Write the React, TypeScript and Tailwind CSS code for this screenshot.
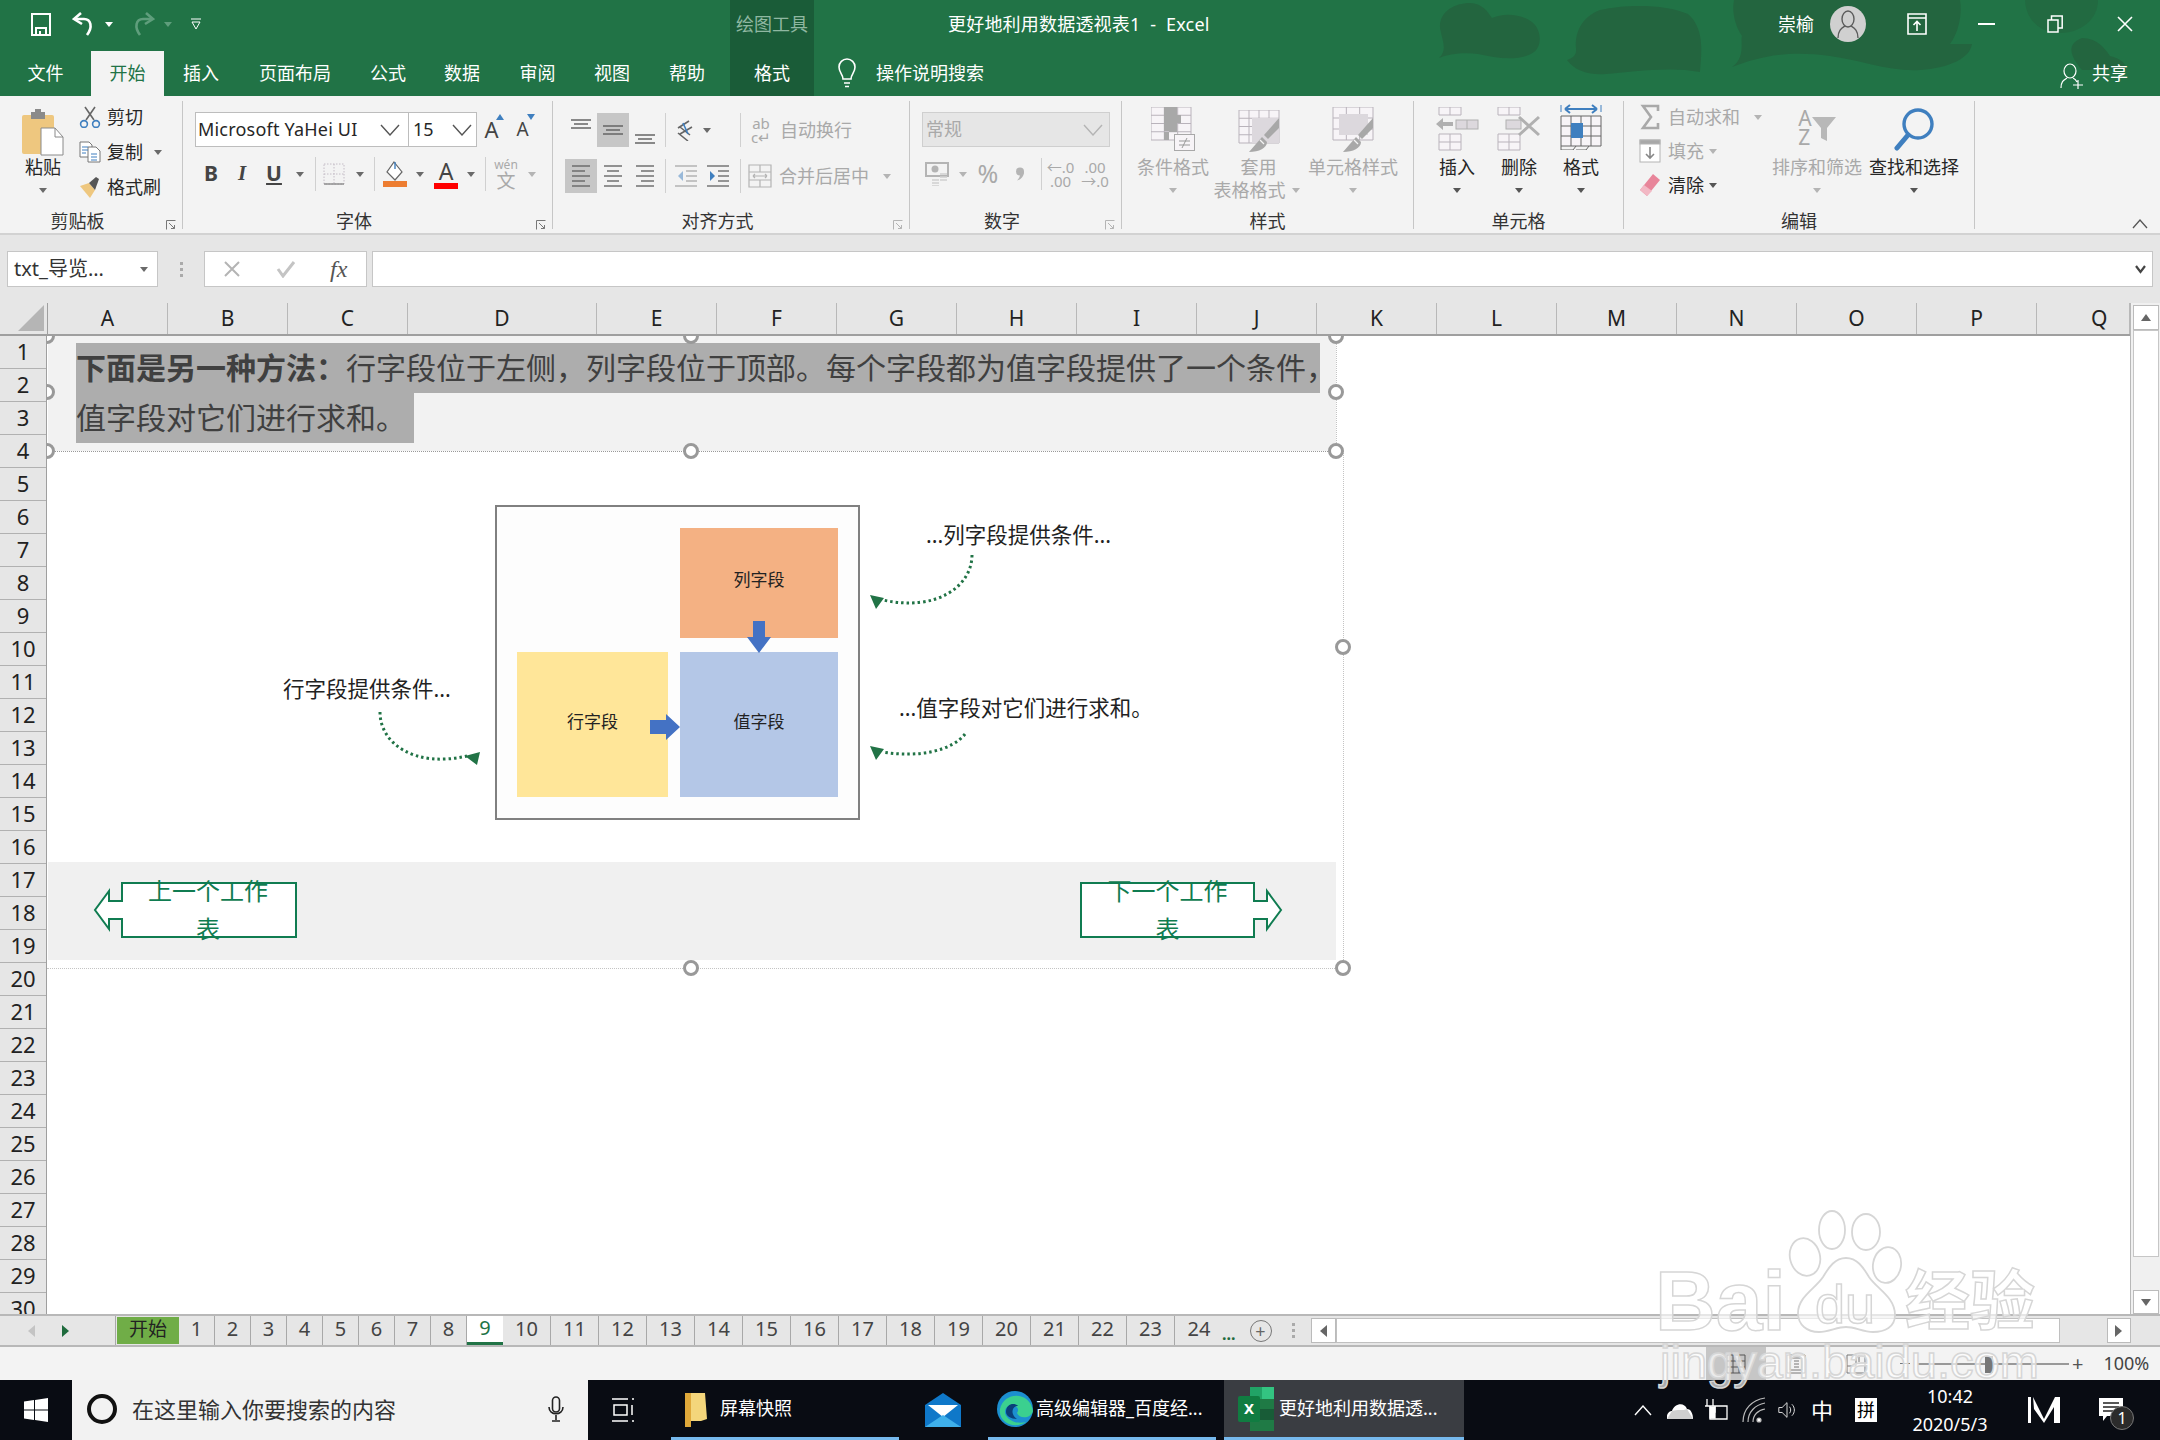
import React from 'react';

const COLS: [string, number][] = [
  ['A', 120], ['B', 120], ['C', 120], ['D', 189], ['E', 120], ['F', 120], ['G', 120], ['H', 120], ['I', 120],
  ['J', 120], ['K', 120], ['L', 120], ['M', 120], ['N', 120], ['O', 120], ['P', 120], ['Q', 93],
];
const ROWS = Array.from({ length: 30 }, (_, i) => i + 1);
const SHEETS = Array.from({ length: 24 }, (_, i) => i + 1);

const GREY = '#b4b4b4';

function Caret({ color = '#6a6a6a' }: { color?: string }) {
  return (
    <svg width="8" height="5" viewBox="0 0 8 5" className="shrink-0">
      <path d="M0 0h8L4 5z" fill={color} />
    </svg>
  );
}

function Chevron({ color = '#555', size = 20 }: { color?: string; size?: number }) {
  return (
    <svg width={size} height={size * 0.6} viewBox="0 0 20 12" fill="none">
      <path d="M1 1l9 10 9-10" stroke={color} strokeWidth="1.4" />
    </svg>
  );
}

function Launcher({ color = '#777' }: { color?: string }) {
  return (
    <svg width="10" height="10" viewBox="0 0 10 10" fill="none" className="absolute right-[6px] top-[6px]" stroke={color}>
      <path d="M.5 9.5v-9h9M3 3l5.5 5.5M8.5 5v3.5H5" />
    </svg>
  );
}

function Sep({ h = 'h-[34px]' }: { h?: string }) {
  return <span className={`w-px shrink-0 bg-[#d0d0d0] ${h}`} />;
}

function Lines({ kind, color = '#666' }: { kind: 'l' | 'c' | 'r'; color?: string }) {
  const rows = [0, 1, 2, 3, 4];
  return (
    <svg width="20" height="24" viewBox="0 0 20 24" stroke={color} strokeWidth="1.4">
      {rows.map((r) => {
        const short = r % 2 === 1;
        const x1 = kind === 'l' ? 1 : kind === 'c' ? (short ? 4 : 1) : short ? 6 : 1;
        const x2 = kind === 'l' ? (short ? 14 : 19) : kind === 'c' ? (short ? 16 : 19) : 19;
        return <line key={r} x1={x1} x2={x2} y1={2 + r * 5} y2={2 + r * 5} />;
      })}
    </svg>
  );
}

function VAlign() {
  return (
    <svg width="20" height="10" viewBox="0 0 20 10" stroke="#666" strokeWidth="1.4">
      <path d="M0 1h20M3 5h14M0 9h20" />
    </svg>
  );
}

function LargeBtn({ width, icon, label, second, muted, caret = true }: {
  width: string; icon: React.ReactNode; label: string; second?: React.ReactNode; muted?: boolean; caret?: boolean;
}) {
  return (
    <div className={`flex flex-col items-center pt-[6px] ${width} ${muted ? 'text-[#a9a9a9]' : 'text-[#262626]'}`}>
      <div className="h-[50px] flex items-start justify-center">{icon}</div>
      <div className="h-[20px] leading-[20px] text-[18px] whitespace-nowrap">{label}</div>
      <div className="h-[26px] flex items-center justify-center gap-[6px] text-[18px] whitespace-nowrap">
        {second}
        {caret && <Caret color={muted ? GREY : '#555'} />}
      </div>
    </div>
  );
}

function GridGlyph({ w, h, cols, rows, color = '#b9b3bb', x = 0, y = 0 }: { w: number; h: number; cols: number; rows: number; color?: string; x?: number; y?: number }) {
  const lines = [];
  for (let i = 0; i <= cols; i++) lines.push(<line key={`c${i}`} x1={x + (w * i) / cols} x2={x + (w * i) / cols} y1={y} y2={y + h} />);
  for (let i = 0; i <= rows; i++) lines.push(<line key={`r${i}`} y1={y + (h * i) / rows} y2={y + (h * i) / rows} x1={x} x2={x + w} />);
  return (
    <g>
      <rect x={x} y={y} width={w} height={h} fill="#f7f4f7" />
      <g stroke={color} strokeWidth="1">{lines}</g>
    </g>
  );
}

function BrushGlyph() {
  return (
    <g fill="#a8a8a8">
      <path d="M41 11v10L30 32l-4-4z" />
      <path d="M24 30l5 5c0 6-8 10-18 10z" />
      <path d="M22 33l4 4" stroke="#f3f3f3" strokeWidth="1.2" />
    </g>
  );
}

function Group({ width, label, launcher, launcherColor, children }: {
  width: string; label: string; launcher?: boolean; launcherColor?: string; children: React.ReactNode;
}) {
  return (
    <div className={`h-[128px] flex flex-col shrink-0 border-r border-[#c6c6c6] ${width}`}>
      <div className="h-[113px]">{children}</div>
      <div className={`relative h-[15px] leading-[15px] text-center text-[18px] text-[#333] ${launcher ? 'pr-[27px]' : ''}`}>
        {label}
        {launcher && <Launcher color={launcherColor} />}
      </div>
    </div>
  );
}

function SmallRow({ iconW, icon, text, muted, children }: { iconW: string; icon: React.ReactNode; text: string; muted?: boolean; children?: React.ReactNode }) {
  return (
    <div className={`h-[32px] flex items-center text-[18px] ${muted ? 'text-[#a9a9a9]' : 'text-[#262626]'}`}>
      <span className={`flex justify-center shrink-0 ${iconW}`}>{icon}</span>
      <span className="ml-[6px] whitespace-nowrap">{text}</span>
      {children}
    </div>
  );
}

function TitleBar() {
  return (
    <div className="h-[51px] flex items-center text-white relative">
      <div className="w-[730px] flex items-center shrink-0 pb-[3px]">
        <svg width="20" height="23" viewBox="0 0 20 23" fill="none" stroke="#fff" strokeWidth="2" className="ml-[31px]">
          <path d="M1 1h18v21H1z" />
          <path d="M5 22v-7h10v7" />
          <path d="M9 18v4" />
        </svg>
        <svg width="24" height="26" viewBox="0 0 24 26" fill="none" stroke="#fff" strokeWidth="2.6" className="ml-[21px]">
          <path d="M9 2L2 8l8 5" />
          <path d="M3 8h9c7 0 9 8 3 16" />
        </svg>
        <span className="ml-[9px]"><Caret color="#fff" /></span>
        <svg width="24" height="26" viewBox="0 0 24 26" fill="none" stroke="#5f9e7c" strokeWidth="2.6" className="ml-[18px]">
          <path d="M15 2l7 6-8 5" />
          <path d="M21 8h-9c-7 0-9 8-3 16" />
        </svg>
        <span className="ml-[9px]"><Caret color="#5f9e7c" /></span>
        <svg width="12" height="12" viewBox="0 0 12 12" fill="none" stroke="#fff" className="ml-[18px]">
          <path d="M1 1h10M2 4h8L6 11z" />
        </svg>
      </div>
      <div className="w-[84px] h-full bg-[#1a5c38] shrink-0 flex items-center justify-center text-[18px] text-[#8fb7a1] pb-[3px]">绘图工具</div>
      <div className="ml-[134px] text-[18px] whitespace-pre tracking-[0.2px] pb-[3px]">更好地利用数据透视表1  -  Excel</div>
      <div className="ml-auto flex items-center text-[18px] pb-[3px]">
        <span>崇榆</span>
        <span className="ml-[16px] w-[36px] h-[36px] rounded-full bg-[#d0d0d0] flex items-center justify-center">
          <svg width="26" height="32" viewBox="0 0 26 32" fill="none" stroke="#5c5c5c" strokeWidth="1.4">
            <ellipse cx="13" cy="11" rx="6" ry="8" />
            <path d="M3 30c0-8 4-10 7-12M23 30c0-8-4-10-7-12" />
          </svg>
        </span>
        <svg width="20" height="22" viewBox="0 0 20 22" fill="none" stroke="#fff" strokeWidth="1.6" className="ml-[41px]">
          <path d="M1 1h18v20H1zM1 5h18M10 18v-9M6.5 12L10 8.5l3.5 3.5" />
        </svg>
        <span className="ml-[51px] w-[17px] h-[2px] bg-white" />
        <svg width="16" height="18" viewBox="0 0 16 18" fill="none" stroke="#fff" strokeWidth="1.5" className="ml-[52px]">
          <path d="M1 5h10v12H1zM4.500 5V1h10.700v12H11" />
        </svg>
        <svg width="16" height="16" viewBox="0 0 16 16" stroke="#fff" strokeWidth="1.6" className="ml-[54px] mr-[27px]">
          <path d="M1 1l14 14M15 1L1 15" />
        </svg>
      </div>
    </div>
  );
}

const TABS: [string, string][] = [
  ['文件', 'w-[91px]'], ['开始', 'w-[73px]'], ['插入', 'w-[74px]'], ['页面布局', 'w-[114px]'], ['公式', 'w-[72px]'],
  ['数据', 'w-[76px]'], ['审阅', 'w-[75px]'], ['视图', 'w-[74px]'], ['帮助', 'w-[76px]'],
];

function TabBar() {
  return (
    <div className="h-[45px] flex text-[18px] text-white relative">
      {TABS.map(([t, w]) => (
        <div key={t} className={`${w} flex items-center justify-center ${t === '开始' ? 'bg-[#f3f3f3] text-[#217346]' : ''}`}>{t}</div>
      ))}
      <div className="w-[5px]" />
      <div className="w-[84px] bg-[#1a5c38] flex items-center justify-center">格式</div>
      <svg width="22" height="30" viewBox="0 0 22 30" fill="none" stroke="#fff" strokeWidth="1.6" className="ml-[22px] mt-[7px]">
        <path d="M7 21c0-5-4-6-4-12a8 8 0 0116 0c0 6-4 7-4 12zM8 25h6M9 28.5h4" />
      </svg>
      <div className="ml-[18px] flex items-center">操作说明搜索</div>
      <div className="ml-auto flex items-center">
        <svg width="24" height="26" viewBox="0 0 24 26" fill="none" stroke="#fff" strokeWidth="1.2" className="mr-[8px] mt-[4px]">
          <ellipse cx="10" cy="8" rx="6" ry="7" />
          <path d="M1 25c0-7 3-8 6-10M13 15c2 1 3 2 4 4M13 22h10M18 17v9" />
        </svg>
        <span className="mr-[32px]">共享</span>
      </div>
    </div>
  );
}

function Ribbon() {
  return (
    <div className="h-[139px] pt-[5px] bg-[#f3f3f3] flex border-b-2 border-[#d2d2d2] box-border">
      {/* 剪贴板 */}
      <Group width="w-[183px]" label="剪贴板" launcher>
        <div className="flex">
          <div className="w-[78px] pl-[8px] pt-[6px] flex flex-col items-center text-[18px] text-[#262626]">
            <svg width="42" height="46" viewBox="0 0 42 46" className="h-[50px]">
              <rect x="0" y="6" width="32" height="39" rx="2" fill="#eec77f" />
              <rect x="9" y="3" width="14" height="7" fill="#8a8a8a" />
              <rect x="13" y="0" width="6" height="5" fill="#8a8a8a" />
              <path d="M19 19h14l8 9v18H19z" fill="#fff" stroke="#8a8a8a" />
              <path d="M33 19v9h8" fill="none" stroke="#8a8a8a" />
            </svg>
            <div className="h-[20px] leading-[20px]">粘贴</div>
            <div className="h-[26px] flex items-center"><Caret /></div>
          </div>
          <div className="flex flex-col gap-[3px]">
            <SmallRow iconW="w-[23px]" text="剪切" icon={
              <svg width="22" height="22" viewBox="0 0 22 22" fill="none">
                <path d="M6 1l9 13M16 1L7 14" stroke="#666" strokeWidth="1.6" />
                <circle cx="5" cy="18" r="3.4" stroke="#3f7fbf" strokeWidth="1.6" />
                <circle cx="17" cy="18" r="3.4" stroke="#3f7fbf" strokeWidth="1.6" />
              </svg>} />
            <SmallRow iconW="w-[23px]" text="复制" icon={
              <svg width="22" height="22" viewBox="0 0 22 22" fill="#fff" stroke="#777">
                <path d="M1 1h9l3 3v12H1z" />
                <path d="M9 6h8l4 4v11H9z" />
                <path d="M3 6h6M3 9h6M3 12h4M12 13h6M12 16h6M12 19h6" stroke="#3f7fbf" />
              </svg>}>
              <span className="ml-[11px]"><Caret /></span>
            </SmallRow>
            <SmallRow iconW="w-[23px]" text="格式刷" icon={
              <svg width="22" height="22" viewBox="0 0 22 22">
                <path d="M1 10l9-3 6 7-5 8z" fill="#eec77f" />
                <path d="M10 7l7-6 3 2-4 11z" fill="#555" />
              </svg>} />
          </div>
        </div>
      </Group>

      {/* 字体 */}
      <Group width="w-[370px]" label="字体" launcher>
        <div className="flex flex-col pt-[11px]">
          <div className="flex items-center h-[35px] ml-[12px]">
            <div className="w-[282px] h-[35px] flex bg-white border border-[#bdbdbd] text-[18px] text-[#262626]">
              <div className="w-[213px] pl-[2px] flex items-center justify-between pr-[8px] border-r border-[#bdbdbd] whitespace-nowrap">
                <span className="tracking-[0.2px]">Microsoft YaHei UI</span><Chevron />
              </div>
              <div className="flex-1 pl-[4px] pr-[4px] flex items-center justify-between"><span>15</span><Chevron /></div>
            </div>
            <div className="w-[31px] ml-[-1px] relative text-center text-[22px] leading-[35px] text-[#444]">A<span className="absolute left-[20px] top-[2px]"><svg width="8" height="6" viewBox="0 0 8 6"><path d="M4 0l4 6H0z" fill="#3f7fbf" /></svg></span></div>
            <div className="w-[31px] relative text-center text-[19px] leading-[35px] text-[#444]">A<span className="absolute left-[20px] top-[2px]"><svg width="8" height="6" viewBox="0 0 8 6"><path d="M4 6l4-6H0z" fill="#3f7fbf" /></svg></span></div>
          </div>
          <div className="flex items-center h-[34px] mt-[10px] ml-[13px] text-[#444]">
            <span className="w-[30px] text-center text-[21px] font-bold">B</span>
            <span className="w-[32px] text-center text-[21px] italic [font-family:'Liberation_Serif',serif] font-bold">I</span>
            <span className="w-[32px] text-center text-[21px] font-bold underline">U</span>
            <span className="w-[20px] flex justify-center"><Caret /></span>
            <span className="w-[5px]" /><Sep />
            <span className="w-[36px] flex justify-center">
              <svg width="22" height="22" viewBox="0 0 22 22" fill="none">
                <path d="M1 1h20v20H1zM11 1v20M1 11h20" stroke="#c4bcc6" strokeDasharray="1.5 1.5" />
                <path d="M1 21h20" stroke="#888" strokeWidth="1.4" />
              </svg>
            </span>
            <span className="w-[16px] flex justify-center"><Caret /></span>
            <span className="w-[6px]" /><Sep />
            <span className="w-[40px] flex justify-center">
              <svg width="24" height="26" viewBox="0 0 24 26" fill="none">
                <path d="M11 1l8 10-7 8-8-8z" fill="#fff" stroke="#666" strokeWidth="1.2" />
                <path d="M12 1v7" stroke="#3f7fbf" strokeWidth="1.4" />
                <rect x="0" y="20" width="24" height="6" fill="#ed7d31" />
              </svg>
            </span>
            <span className="w-[10px] flex justify-center"><Caret /></span>
            <span className="w-[42px] flex flex-col items-center">
              <span className="text-[23px] leading-[24px] text-[#444]">A</span>
              <span className="w-[24px] h-[6px] bg-[#ff0000]" />
            </span>
            <span className="w-[8px] flex justify-center"><Caret /></span>
            <span className="w-[10px]" /><Sep />
            <span className="w-[40px] flex flex-col items-center text-[#a9a9a9] text-[12px] leading-[13px]">
              <span>wén</span>
              <span className="text-[19px] leading-[20px]">文</span>
            </span>
            <span className="w-[12px] flex justify-center"><Caret color={GREY} /></span>
          </div>
        </div>
      </Group>

      {/* 对齐方式 */}
      <Group width="w-[357px]" label="对齐方式" launcher launcherColor={GREY}>
        <div className="flex flex-col pt-[12px] text-[18px] text-[#a9a9a9]">
          <div className="flex items-center h-[34px] ml-[12px]">
            <span className="w-[32px] h-[34px] flex justify-center pt-[6px]"><VAlign /></span>
            <span className="w-[32px] h-[34px] flex items-center justify-center bg-[#c6c6c6]"><VAlign /></span>
            <span className="w-[32px] h-[34px] flex justify-center items-end pb-[3px]"><VAlign /></span>
            <span className="w-[4px]" /><Sep />
            <span className="w-[38px] flex justify-center">
              <svg width="20" height="22" viewBox="0 0 20 22" fill="none" stroke="#666" strokeWidth="1.6">
                <path d="M3 9L14 2M5 15L17 8M3 14l10 8M5 8l10 8" />
                <path d="M8 4l5 11" stroke="#3f7fbf" />
              </svg>
            </span>
            <span className="w-[6px] flex justify-center"><Caret /></span>
            <span className="w-[30px]" /><Sep />
            <span className="w-[40px] flex flex-col items-center text-[15px] leading-[14px] text-[#a9a9a9]">
              <span>ab</span><span>c↵</span>
            </span>
            <span className="whitespace-nowrap ml-[-1px]">自动换行</span>
          </div>
          <div className="flex items-center h-[34px] mt-[12px] ml-[12px]">
            <span className="w-[32px] h-[34px] flex items-center justify-center bg-[#c6c6c6]"><Lines kind="l" /></span>
            <span className="w-[32px] flex justify-center"><Lines kind="c" /></span>
            <span className="w-[32px] flex justify-center"><Lines kind="r" /></span>
            <span className="w-[4px]" /><Sep />
            <span className="w-[40px] flex justify-center">
              <svg width="22" height="22" viewBox="0 0 22 22" fill="none" stroke="#b4b4b4" strokeWidth="1.3">
                <path d="M0 1h22M11 6h11M11 11h11M11 16h11M0 21h22" />
                <path d="M8 6l-5 5 5 5z" fill="#3f7fbf" stroke="none" opacity=".5" />
              </svg>
            </span>
            <span className="w-[24px] flex justify-center">
              <svg width="22" height="22" viewBox="0 0 22 22" fill="none" stroke="#777" strokeWidth="1.3">
                <path d="M0 1h22M11 6h11M11 11h11M11 16h11M0 21h22" />
                <path d="M3 6l5 5-5 5z" fill="#3f7fbf" stroke="none" />
              </svg>
            </span>
            <span className="w-[10px]" /><Sep />
            <span className="w-[38px] flex justify-center">
              <svg width="24" height="24" viewBox="0 0 24 24" fill="none" stroke={GREY} strokeWidth="1.2">
                <path d="M1 1h22v22H1zM1 8h22M1 16h22M12 1v7M12 16v7M5 12h14M5 12l2-2M5 12l2 2M19 12l-2-2M19 12l-2 2" />
              </svg>
            </span>
            <span className="whitespace-nowrap w-[90px]">合并后居中</span>
            <span className="ml-[14px]"><Caret color={GREY} /></span>
          </div>
        </div>
      </Group>

      {/* 数字 */}
      <Group width="w-[212px]" label="数字" launcher launcherColor={GREY}>
        <div className="flex flex-col pt-[11px]">
          <div className="ml-[12px] w-[188px] h-[35px] bg-[#e6e6e6] border border-[#cfcfcf] flex items-center justify-between pl-[3px] pr-[6px] text-[18px] text-[#a9a9a9]">
            常规<Chevron color={GREY} />
          </div>
          <div className="flex items-center h-[34px] mt-[10px] ml-[15px] text-[#a9a9a9]">
            <span className="w-[24px] flex justify-center">
              <svg width="24" height="24" viewBox="0 0 24 24" fill="none" stroke={GREY}>
                <rect x="1" y="1" width="22" height="13" strokeWidth="2" />
                <circle cx="10" cy="7" r="3.500" fill={GREY} stroke="none" />
                <path d="M15 12h7M15 15h7M15 18h7M7 18h7M7 21h7M7 24h7" strokeWidth="1.6" stroke="#cfcfcf" />
              </svg>
            </span>
            <span className="w-[28px] flex justify-center"><Caret color={GREY} /></span>
            <span className="w-[22px] text-center text-[25px] whitespace-nowrap">%</span>
            <span className="w-[42px] flex justify-center">
              <svg width="10" height="14" viewBox="0 0 10 14" fill={GREY}><circle cx="5" cy="4.500" r="4" /><path d="M9 4.500c0 5-3 8-7 9 2-2 3-4 3-6z" /></svg>
            </span>
            <Sep h="h-[32px]" />
            <span className="w-[37px] text-center text-[15px] leading-[14px] whitespace-nowrap">←.0<br />.00</span>
            <span className="w-[32px] text-center text-[15px] leading-[14px] whitespace-nowrap">.00<br />→.0</span>
          </div>
        </div>
      </Group>

      {/* 样式 */}
      <Group width="w-[292px]" label="样式" >
        <div className="flex pl-[15px]">
          <LargeBtn muted width="w-[72px]" label="条件格式" icon={
            <svg width="44" height="44" viewBox="0 0 44 44">
              <GridGlyph w={40} h={33} cols={3} rows={4} />
              <path d="M13 0h13v8h4v8h-4v9h-8v-1h-5z" fill="#a8a8a8" />
              <path d="M13 25h5v8h-5z" fill="#a8a8a8" />
              <rect x="23.500" y="27.500" width="20" height="16" fill="#f7f4f7" stroke="#a8a8a8" />
              <path d="M28 34h11M28 38h11M36 31l-5 10" stroke="#999" fill="none" />
            </svg>} />
          <LargeBtn muted width="w-[99px]" label="套用" second={<span className="ml-[-4px]">表格格式</span>} icon={
            <svg width="42" height="46" viewBox="0 0 42 46" className="mt-[3px]">
              <GridGlyph w={40} h={33} cols={4} rows={4} x={1} y={0} />
              <rect x="14" y="8" width="27" height="25" fill="#dcd8dd" />
              <g transform="translate(0 -3)"><BrushGlyph /></g>
            </svg>} />
          <LargeBtn muted width="w-[90px]" label="单元格样式" icon={
            <svg width="42" height="46" viewBox="0 0 42 46">
              <GridGlyph w={40} h={33} cols={3} rows={3} x={1} y={0} />
              <rect x="7" y="7" width="29" height="21" fill="#dcd8dd" />
              <BrushGlyph />
            </svg>} />
        </div>
      </Group>

      {/* 单元格 */}
      <Group width="w-[210px]" label="单元格">
        <div className="flex pl-[12px]">
          <LargeBtn width="w-[62px]" label="插入" icon={
            <svg width="44" height="44" viewBox="0 0 44 44">
              <GridGlyph w={22} h={8} cols={2} rows={1} x={4} y={0} />
              <GridGlyph w={22} h={16} cols={2} rows={2} x={4} y={27} />
              <rect x="21" y="13" width="22" height="9" fill="#dcd8dd" stroke="#b0b0b0" />
              <path d="M32 13v9" stroke="#b0b0b0" />
              <path d="M1 17l7-6v4h10v4H8v4z" fill="#b0b0b0" />
            </svg>} />
          <LargeBtn width="w-[62px]" label="删除" icon={
            <svg width="44" height="44" viewBox="0 0 44 44">
              <GridGlyph w={22} h={8} cols={2} rows={1} x={1} y={0} />
              <GridGlyph w={22} h={16} cols={2} rows={2} x={1} y={27} />
              <rect x="9" y="13" width="15" height="9" fill="#dcd8dd" stroke="#b0b0b0" />
              <path d="M22 10l20 18M42 10L22 28" stroke="#b0b0b0" strokeWidth="3" />
            </svg>} />
          <LargeBtn width="w-[62px]" label="格式" icon={
            <svg width="42" height="46" viewBox="0 0 42 46" className="mt-[-3px]">
              <path d="M5 5h32M5 5l5-4M5 5l5 4M37 5l-5-4M37 5l-5 4" stroke="#3f7fbf" strokeWidth="2" fill="none" />
              <path d="M1 1v7M41 1v7" stroke="#3f7fbf" />
              <GridGlyph w={40} h={30} cols={4} rows={3} x={1} y={12} color="#666" />
              <rect x="11" y="19" width="12" height="15" fill="#3f7fbf" />
              <path d="M1 42v4h12l3-4M16 46h10l3-4" fill="none" stroke="#666" />
            </svg>} />
        </div>
      </Group>

      {/* 编辑 */}
      <Group width="w-[351px]" label="编辑">
        <div className="flex pl-[13px]">
          <div className="w-[134px] flex flex-col gap-[2px]">
            <SmallRow muted iconW="w-[25px]" text="自动求和" icon={
              <svg width="20" height="26" viewBox="0 0 20 26" fill="none" stroke="#a9a9a9" strokeWidth="2.6"><path d="M18 7V2H3l8 11-8 11h15v-5" /></svg>}>
              <span className="ml-[14px]"><Caret color={GREY} /></span>
            </SmallRow>
            <SmallRow muted iconW="w-[25px]" text="填充" icon={
              <svg width="22" height="24" viewBox="0 0 22 24" fill="#fff" stroke={GREY}>
                <rect x="1" y="1" width="20" height="22" />
                <rect x="1" y="1" width="20" height="4" fill="#a8a8a8" />
                <path d="M11 8v11M7 15l4 4 4-4" fill="none" strokeWidth="1.6" stroke="#888" />
              </svg>}>
              <span className="ml-[5px]"><Caret color={GREY} /></span>
            </SmallRow>
            <SmallRow iconW="w-[25px]" text="清除" icon={
              <svg width="22" height="24" viewBox="0 0 22 24">
                <path d="M1 17L14 1l7 6-13 16z" fill="#e8859a" />
                <path d="M1 17l4-5 8 6-5 5z" fill="#f2b8c4" />
              </svg>}>
              <span className="ml-[5px]"><Caret color="#555" /></span>
            </SmallRow>
          </div>
          <LargeBtn muted width="w-[92px]" label="排序和筛选" icon={
            <div className="flex items-start">
              <span className="flex flex-col text-[21px] leading-[19px] text-[#a9a9a9] mt-[2px]"><span>A</span><span>Z</span></span>
              <svg width="24" height="24" viewBox="0 0 24 24" className="mt-[10px]"><path d="M0 0h24l-9 11v13l-6-3V11z" fill="#b8b8b8" /></svg>
            </div>} />
          <div className="w-[5px]" />
          <LargeBtn width="w-[92px]" label="查找和选择" icon={
            <svg width="42" height="44" viewBox="0 0 42 44" fill="none" stroke="#3f7fbf">
              <circle cx="25" cy="17" r="14" strokeWidth="3.4" />
              <path d="M15 28L4 41" strokeWidth="5" strokeLinecap="round" />
            </svg>} />
        </div>
      </Group>

      <div className="flex-1 h-[128px] flex items-end justify-end pr-[12px]">
        <svg width="16" height="10" viewBox="0 0 16 10" fill="none" stroke="#555" strokeWidth="1.3"><path d="M1 9l7-8 7 8" /></svg>
      </div>
    </div>
  );
}

function FormulaBar() {
  return (
    <div className="h-[68px] bg-[#e6e6e6] flex items-start pt-[16px]">
      <div className="ml-[7px] w-[151px] h-[36px] bg-white border border-[#c6c6c6] flex items-center justify-between pl-[6px] pr-[9px] text-[20px] text-[#333]">
        <span>txt_导览...</span><Caret />
      </div>
      <div className="w-[46px] h-[36px] flex flex-col items-center justify-center gap-[3px]">
        <span className="w-[3px] h-[3px] bg-[#aaa]" /><span className="w-[3px] h-[3px] bg-[#aaa]" /><span className="w-[3px] h-[3px] bg-[#aaa]" />
      </div>
      <div className="w-[163px] h-[36px] bg-white border border-[#c6c6c6] flex items-center text-[#a9a9a9]">
        <svg width="18" height="18" viewBox="0 0 18 18" stroke="#b4b4b4" strokeWidth="2" className="ml-[18px]"><path d="M2 2l14 14M16 2L2 16" /></svg>
        <svg width="20" height="18" viewBox="0 0 20 18" fill="none" stroke="#c4c4c4" strokeWidth="3" className="ml-[35px]"><path d="M2 9l5 7L18 2" /></svg>
        <span className="ml-[34px] italic text-[24px] [font-family:'Liberation_Serif',serif] text-[#555]">fx</span>
      </div>
      <div className="ml-[5px] w-[1781px] h-[36px] bg-white border border-[#c6c6c6] flex items-center justify-end pr-[6px]">
        <svg width="11" height="9" viewBox="0 0 11 9" fill="none" stroke="#444" strokeWidth="2.2"><path d="M1 1l4.500 6L10 1" /></svg>
      </div>
    </div>
  );
}

function ColumnHeader() {
  return (
    <div className="h-[33px] flex bg-[#e6e6e6] border-b-2 border-[#9f9f9f] box-border">
      <div className="w-[48px] h-full flex items-end justify-end pr-[3px] pb-[3px] border-r border-[#9f9f9f] box-border">
        <svg width="26" height="26" viewBox="0 0 26 26"><path d="M26 0v26H0z" fill="#b5b5b5" /></svg>
      </div>
      {COLS.map(([c, w]) => (
        <div
          key={c}
          style={{ width: w }}
          className={`h-full flex items-center text-[21px] text-[#222] border-r border-[#b8b8b8] box-border last:border-r-0 ${c === 'Q' ? 'justify-start pl-[54px]' : 'justify-center'}`}
        >
          {c}
        </div>
      ))}
      <div className="flex-1 bg-[#e6e6e6]" />
    </div>
  );
}

function Handle({ cx, cy }: { cx: number; cy: number }) {
  return (
    <span
      style={{ left: cx - 8, top: cy - 8 }}
      className="absolute w-[16px] h-[16px] rounded-full bg-white border-[3px] border-[#999]"
    />
  );
}

// 画布坐标以 A1 左上角为原点
function Canvas() {
  return (
    <div className="relative flex-1 bg-white overflow-hidden">
      {/* 说明文字框 */}
      <div className="absolute left-[1px] top-0 w-[1288px] h-[115px] pt-[7px] pl-[28px] bg-[#f2f2f2] text-[30px] text-[#404040]">
        <div className="w-[1244px] h-[50px] leading-[50px] bg-[#adadad] whitespace-nowrap"><b>下面是另一种方法：</b>行字段位于左侧，列字段位于顶部。每个字段都为值字段提供了一个条件，</div>
        <div className="w-[338px] h-[50px] leading-[50px] bg-[#adadad] whitespace-nowrap">值字段对它们进行求和。</div>
      </div>
      <div className="absolute left-[1px] top-[526px] w-[1288px] h-[98px] bg-[#f0f0f0]" />

      {/* 选区虚线 */}
      <div className="absolute left-0 top-[115px] w-[1289px] border-t border-dotted border-[#999]" />
      <div className="absolute left-[1289px] top-0 h-[115px] border-l border-dotted border-[#c4c4c4]" />
      <div className="absolute left-[1296px] top-[115px] h-[517px] border-l border-dotted border-[#c4c4c4]" />
      <div className="absolute left-0 top-[632px] w-[1296px] border-t border-dotted border-[#c4c4c4]" />

      {/* 图示 */}
      <div className="absolute left-[448px] top-[169px] w-[365px] h-[315px] bg-[#fdfdfd] border-2 border-[#808080]" />
      <div className="absolute left-[633px] top-[192px] w-[158px] h-[110px] bg-[#f4b183] flex items-center justify-center text-[17px] text-[#222] pb-[6px]">列字段</div>
      <div className="absolute left-[470px] top-[316px] w-[151px] h-[145px] bg-[#ffe699] flex items-center justify-center text-[17px] text-[#222] pb-[5px]">行字段</div>
      <div className="absolute left-[633px] top-[316px] w-[158px] h-[145px] bg-[#b4c7e7] flex items-center justify-center text-[17px] text-[#222] pb-[5px]">值字段</div>

      <span className="absolute left-[236px] top-[338px] text-[21.500px] leading-[30px] text-[#222] whitespace-nowrap">行字段提供条件...</span>
      <span className="absolute left-[879px] top-[184px] text-[21.500px] leading-[30px] text-[#222] whitespace-nowrap">...列字段提供条件...</span>
      <span className="absolute left-[852px] top-[357px] text-[21.500px] leading-[30px] text-[#222] whitespace-nowrap">...值字段对它们进行求和。</span>

      <svg className="absolute inset-0 w-full h-full pointer-events-none">
        <path d="M706 285h12v16h6l-12 16-12-16h6z" fill="#4472c4" />
        <path d="M603 384h16v-6l14 13-14 13v-6h-16z" fill="#4472c4" />
        <g fill="none" stroke="#217346" strokeWidth="3" strokeDasharray="2.5 3">
          <path d="M333 376C333 408 368 432 420 420" />
          <path d="M925 219C925 250 890 276 836 264" />
          <path d="M918 398C905 415 870 422 836 416" />
        </g>
        <path d="M433 416l-15 4 12 9zM823 259l14 3-8 11zM823 410l14 3-8 11z" fill="#217346" />
        {/* 导航按钮外形 */}
        <path d="M75 547h174v54H75v-18H62v10L48 574l14-19v10h13z" fill="#fff" stroke="#107c51" strokeWidth="2" />
        <path d="M1034 547h173v18h13v-10l14 19-14 19v-10h-13v18h-173z" fill="#fff" stroke="#107c51" strokeWidth="2" />
      </svg>

      <div className="absolute left-[74px] top-[536px] w-[174px] text-center text-[24px] leading-[38px] text-[#107c51]">上一个工作<br />表</div>
      <div className="absolute left-[1034px] top-[536px] w-[173px] text-center text-[24px] leading-[38px] text-[#107c51]">下一个工作<br />表</div>

      <Handle cx={0} cy={0} /><Handle cx={644} cy={0} /><Handle cx={1289} cy={0} />
      <Handle cx={0} cy={56} /><Handle cx={1289} cy={56} />
      <Handle cx={0} cy={115} /><Handle cx={644} cy={115} /><Handle cx={1289} cy={115} />
      <Handle cx={1296} cy={311} /><Handle cx={644} cy={632} /><Handle cx={1296} cy={632} />
    </div>
  );
}

function Sheet() {
  return (
    <div className="h-[1011px] flex flex-col overflow-hidden">
      <ColumnHeader />
      <div className="flex-1 flex min-h-0">
        <div className="w-[46px] shrink-0 bg-[#e6e6e6] border-r border-[#9f9f9f] box-content overflow-hidden">
          {ROWS.map((r) => (
            <div key={r} className="h-[33px] flex items-center justify-center pb-[2px] text-[22px] text-[#222] border-b border-[#b1b1b1] box-border">{r}</div>
          ))}
        </div>
        <Canvas />
        <div className="w-[30px] shrink-0 bg-[#f0f0f0] flex flex-col items-center border-l border-[#b8b8b8] -mt-[33px]">
          <div className="w-[26px] h-[25px] mt-[2px] bg-white border border-[#bbb] flex items-center justify-center"><svg width="10" height="7" viewBox="0 0 10 7"><path d="M5 0l5 7H0z" fill="#666" /></svg></div>
          <div className="w-[26px] h-[927px] bg-white border border-[#c6c6c6]" />
          <div className="flex-1" />
          <div className="w-[26px] h-[24px] bg-white border border-[#bbb] flex items-center justify-center"><svg width="10" height="7" viewBox="0 0 10 7"><path d="M5 7l5-7H0z" fill="#666" /></svg></div>
        </div>
      </div>
    </div>
  );
}

function SheetTabs() {
  return (
    <div className="h-[33px] bg-[#e6e6e6] flex items-center border-t-2 border-b-2 border-[#b8b8b8] box-border text-[20px] text-[#444]">
      <div className="w-[116px] h-full flex items-center border-r border-[#a8a8a8] shrink-0">
        <svg width="7" height="12" viewBox="0 0 7 12" className="ml-[28px]"><path d="M7 0v12L0 6z" fill="#c4c4c4" /></svg>
        <svg width="7" height="12" viewBox="0 0 7 12" className="ml-[27px]"><path d="M0 0v12l7-6z" fill="#1f6b3d" /></svg>
      </div>
      <div className="w-[62px] ml-px h-[27px] pb-[3px] bg-[#70ad47] text-[#222] flex items-center justify-center shrink-0 text-[19px]">开始</div>
      {SHEETS.map((n) => (
        <div
          key={n}
          className={`h-full pb-[3px] flex items-center justify-center shrink-0 ${n < 10 ? 'w-[36px]' : 'w-[48px]'} ${
            n === 9 ? 'bg-white text-[#217346] border-b-[3px] border-[#217346]' : n === 24 ? '' : 'border-r border-[#a8a8a8]'
          }`}
        >
          {n}
        </div>
      ))}
      <span className="text-[#1f6b3d] ml-[-1px] font-bold text-[16px] leading-[16px] mt-[6px]">...</span>
      <span className="ml-[14px] w-[22px] h-[22px] rounded-full border border-[#777] flex items-center justify-center text-[18px] leading-none text-[#666] shrink-0">+</span>
      <span className="ml-[20px] flex flex-col gap-[3px] shrink-0"><i className="block w-[3px] h-[3px] bg-[#aaa]" /><i className="block w-[3px] h-[3px] bg-[#aaa]" /><i className="block w-[3px] h-[3px] bg-[#aaa]" /></span>
      <div className="ml-[16px] w-[25px] h-[25px] bg-white border border-[#bbb] flex items-center justify-center shrink-0"><svg width="7" height="12" viewBox="0 0 7 12"><path d="M7 0v12L0 6z" fill="#666" /></svg></div>
      <div className="w-[724px] h-[25px] bg-white border border-[#c0c0c0] shrink-0" />
      <div className="w-[47px] shrink-0" />
      <div className="w-[24px] h-[25px] bg-white border border-[#bbb] flex items-center justify-center shrink-0"><svg width="7" height="12" viewBox="0 0 7 12"><path d="M0 0v12l7-6z" fill="#666" /></svg></div>
    </div>
  );
}

function StatusBar() {
  return (
    <div className="h-[33px] bg-[#f3f3f3] flex items-center text-[#555]">
      <div className="ml-[1706px] w-[60px] h-full bg-[#c6c6c6] flex items-center justify-center shrink-0">
        <svg width="20" height="20" viewBox="0 0 20 20" fill="none" stroke="#555"><path d="M1 1h18v18H1zM7 1v18M13 1v18M1 7h18M1 13h18" /></svg>
      </div>
      <svg width="20" height="20" viewBox="0 0 20 20" fill="none" stroke="#777" className="ml-[20px] shrink-0"><path d="M1 1h18v18H1zM4 4h12v12H4zM8 7h5M8 10h5M8 13h5" /></svg>
      <svg width="20" height="20" viewBox="0 0 20 20" fill="none" stroke="#777" className="ml-[40px] shrink-0"><path d="M1 1v18h18V1M1 12h9M10 1v11M13 1v7M1 1h18" /></svg>
      <span className="ml-[34px] w-[10px] h-px bg-[#777] shrink-0" />
      <div className="ml-[8px] w-[151px] h-[2px] bg-[#999] relative shrink-0">
        <span className="absolute left-[67px] top-[-7px] w-[8px] h-[17px] bg-[#777]" />
      </div>
      <span className="ml-[3px] text-[20px] shrink-0">+</span>
      <span className="ml-[20px] text-[18px] shrink-0 text-[#444]">100%</span>
    </div>
  );
}

function TaskItem({ width, active, children }: { width: string; active?: boolean; children: React.ReactNode }) {
  return (
    <div className={`relative h-full flex items-center shrink-0 text-[18px] text-white whitespace-nowrap border-b-[3px] border-[#76b9ed] ${width} ${active ? 'bg-[#3a3d42]' : ''}`}>
      {children}
    </div>
  );
}

function Taskbar() {
  return (
    <div className="h-[60px] bg-[#090c13] flex items-center">
      <div className="w-[72px] flex justify-center shrink-0">
        <svg width="24" height="24" viewBox="0 0 24 24" fill="#fff"><path d="M0 3.500l10-1.400v9.400H0zM11 2l13-2v11.500H11zM0 12.500h10v9.400L0 20.500zM11 12.500h13V24l-13-2z" /></svg>
      </div>
      <div className="w-[516px] h-full pb-[2px] bg-[#f2f2f2] flex items-center text-[22px] text-[#333] shrink-0">
        <span className="ml-[15px] w-[30px] h-[30px] rounded-full border-[4px] border-[#111]" />
        <span className="ml-[15px]">在这里输入你要搜索的内容</span>
        <svg width="16" height="26" viewBox="0 0 16 26" fill="none" stroke="#222" strokeWidth="1.6" className="ml-[152px]"><rect x="4.500" y="1" width="7" height="15" rx="3.500" /><path d="M1 11c0 9 14 9 14 0M8 19v5M4 25h8" /></svg>
      </div>
      <div className="w-[70px] flex justify-center shrink-0">
        <svg width="24" height="24" viewBox="0 0 24 24" fill="none" stroke="#fff" strokeWidth="1.5"><path d="M1 1h16M21 1h2M3 7h13v10H3zM21 7v10M1 23h16M21 23h2" /></svg>
      </div>
      <div className="w-[13px] shrink-0" />
      <TaskItem width="w-[228px]">
        <svg width="22" height="36" viewBox="0 0 22 36" className="ml-[14px]"><path d="M0 2h20l2 26-6 2-12 0-4 6z" fill="#f4d67b" /><path d="M0 2h6v34H0z" fill="#e0a93a" /></svg>
        <span className="ml-[13px]">屏幕快照</span>
      </TaskItem>
      <div className="w-[26px] shrink-0" />
      <svg width="36" height="34" viewBox="0 0 36 34" className="shrink-0"><path d="M18 0l18 12v22H0V12z" fill="#0f78c9" /><path d="M3 12h30L18 24z" fill="#fff" /><path d="M0 34l18-12 18 12z" fill="#3fb0ea" /></svg>
      <div className="w-[27px] shrink-0" />
      <TaskItem width="w-[228px]">
        <svg width="38" height="38" viewBox="0 0 38 38" className="ml-[8px]">
          <circle cx="19" cy="19" r="18" fill="#1c8fd0" />
          <path d="M4 19c4-18 30-18 33 2-2 8-14 8-16 2 4-6-4-10-10-6C4 24 16 36 30 32 18 40 2 32 4 19z" fill="#3bd08f" />
          <path d="M10 22c0-8 8-10 12-6-6 0-8 8-1 13-6 0-11-3-11-7z" fill="#0a3f7a" />
        </svg>
        <span className="ml-[2px] text-[18px]">高级编辑器_百度经...</span>
      </TaskItem>
      <div className="w-[8px] shrink-0" />
      <TaskItem width="w-[240px]" active>
        <svg width="36" height="44" viewBox="0 0 36 44" className="ml-[14px]">
          <path d="M12 0h24v44H12z" fill="#1f7a45" />
          <path d="M24 0h12v12H24z" fill="#33c481" />
          <path d="M12 0h12v12H12z" fill="#21a366" />
          <path d="M12 22h24v11H12z" fill="#185c37" />
          <rect x="0" y="9" width="22" height="26" rx="2" fill="#107c41" />
          <text x="11" y="27" textAnchor="middle" fontSize="15" fontWeight="700" fill="#fff">X</text>
        </svg>
        <span className="ml-[5px]">更好地利用数据透...</span>
      </TaskItem>

      <div className="w-[164px] shrink-0" />
      <div className="w-[30px] flex justify-center shrink-0"><svg width="18" height="11" viewBox="0 0 18 11" fill="none" stroke="#fff" strokeWidth="1.4"><path d="M1 10l8-9 8 9" /></svg></div>
      <div className="w-[44px] flex justify-center shrink-0">
        <svg width="26" height="18" viewBox="0 0 26 18"><path d="M0 18c-1-6 3-8 5-8C7 3 17 0 20 8c4 0 6 5 6 10z" fill="#fff" /><path d="M5 10C10 8 16 10 20 8l6 10H0z" fill="#cfcfcf" /></svg>
      </div>
      <div className="w-[28px] flex justify-center shrink-0">
        <svg width="24" height="24" viewBox="0 0 24 24" fill="none" stroke="#fff" strokeWidth="1.3"><path d="M6 8h17v13H6zM3 1v7M9 1v7M1 8h10v6H6" /><rect x="6" y="9" width="5" height="11" fill="#fff" /></svg>
      </div>
      <div className="w-[48px] flex justify-center shrink-0">
        <svg width="24" height="26" viewBox="0 0 24 26" fill="none" stroke="#bbb" strokeWidth="1.2"><path d="M1 25C1 12 10 3 23 1M6 25C6 15 13 8 23 6M11 25c0-7 5-12 12-13" /><circle cx="17" cy="23" r="2" fill="#fff" /></svg>
      </div>
      <div className="w-[18px] flex justify-center shrink-0">
        <svg width="22" height="22" viewBox="0 0 22 22" fill="none" stroke="#ddd" strokeWidth="1.2"><path d="M1 8h4l6-6v18l-6-6H1zM14 7c2 2 2 6 0 8M17 4c4 4 4 10 0 14" /></svg>
      </div>
      <div className="w-[52px] text-center text-[22px] text-white shrink-0">中</div>
      <div className="w-[36px] flex justify-center shrink-0"><span className="w-[22px] h-[24px] bg-white text-black text-[18px] leading-[24px] text-center">拼</span></div>
      <div className="w-[132px] flex flex-col items-center text-[18px] leading-[28px] text-white shrink-0"><span>10:42</span><span>2020/5/3</span></div>
      <div className="w-[56px] flex justify-center shrink-0">
        <svg width="32" height="26" viewBox="0 0 32 26" fill="#fff"><path d="M0 0l3 0 0 26-3 0zM5 0l11 22L27 0l5 0v26h-6V10l-10 16L6 12z" /></svg>
      </div>
      <div className="w-[78px] flex justify-center shrink-0 relative">
        <svg width="24" height="24" viewBox="0 0 24 24" fill="#fff"><path d="M0 0h24v18H8l-4 5v-5H0z" /><path d="M4 5h16M4 9h16M4 13h10" stroke="#222" strokeWidth="1.4" /></svg>
        <span className="absolute left-[38px] top-[8px] w-[24px] h-[24px] rounded-full bg-[#2b2b2b] border border-[#777] text-white text-[16px] leading-[22px] text-center">1</span>
      </div>
    </div>
  );
}

function Watermark() {
  return (
    <div className="absolute left-[1655px] top-[1205px] w-[390px] h-[200px] pointer-events-none text-white/65 [-webkit-text-stroke:1.5px_#d6d6d6]">
      <span className="absolute left-0 top-[41px] text-[84px] leading-[110px] [font-family:'Liberation_Sans',sans-serif] font-bold">Bai</span>
      <svg width="120" height="130" viewBox="0 0 120 130" className="absolute left-[130px] top-0" fill="#ffffff" fillOpacity=".65" stroke="#d6d6d6" strokeWidth="1.8">
        <ellipse cx="20" cy="52" rx="15" ry="19" transform="rotate(-15 20 52)" />
        <ellipse cx="47" cy="25" rx="13" ry="19" />
        <ellipse cx="81" cy="27" rx="14" ry="18" />
        <ellipse cx="102" cy="60" rx="14" ry="18" transform="rotate(10 102 60)" />
        <path d="M61 53C72 53 78 62 84 72 92 84 110 92 110 110 110 122 100 127 88 127 78 127 70 122 61 122 52 122 44 127 34 127 22 127 13 120 13 108 13 92 30 84 38 72 44 62 50 53 61 53z" />
      </svg>
      <span className="absolute left-[160px] top-[69px] text-[54px] leading-[60px] [font-family:'Liberation_Sans',sans-serif]">du</span>
      <span className="absolute left-[250px] top-[54px] text-[65px] leading-[80px] font-bold">经验</span>
      <span className="absolute left-[5px] top-[127px] text-[47px] leading-[60px] [font-family:'Liberation_Sans',sans-serif] whitespace-nowrap">jingyan.baidu.com</span>
    </div>
  );
}

export default function App() {
  return (
    <div className="relative w-[2160px] h-[1440px] overflow-hidden bg-white [font-family:'Noto_Sans','Noto_Sans_CJK_SC',sans-serif]">
      <div className="relative bg-[#217346]">
        <svg width="730" height="96" viewBox="0 0 730 96" className="absolute right-0 top-0" fill="#23653f">
          <path d="M9 58C18 50 12 40 10 28 9 12 24 3 40 3 52 3 58 12 62 18 72 13 90 13 102 22 112 30 112 46 104 52 90 62 66 58 48 54 34 52 18 54 9 58Z" />
          <path d="M137 60C146 72 160 75 176 74 200 72 240 66 270 72 272 50 274 28 258 14 236 4 196 4 170 10 150 18 145 34 146 48 147 56 142 58 137 60Z" />
          <path d="M302 67C316 58 310 40 312 36 304 24 302 10 304 0H530C532 12 530 30 520 44L542 44C540 58 520 68 490 70 460 72 430 60 400 56 360 50 330 56 302 67Z" />
          <path d="M652 70C640 56 636 44 652 38 668 38 676 50 680 56 690 58 697 64 696 70Z" />
          <path d="M595 0H668C668 20 650 33 630 33 610 33 596 20 595 0Z" fill="#226a41" />
        </svg>
        <TitleBar />
        <TabBar />
      </div>
      <Ribbon />
      <FormulaBar />
      <Sheet />
      <SheetTabs />
      <StatusBar />
      <Taskbar />
      <Watermark />
    </div>
  );
}
